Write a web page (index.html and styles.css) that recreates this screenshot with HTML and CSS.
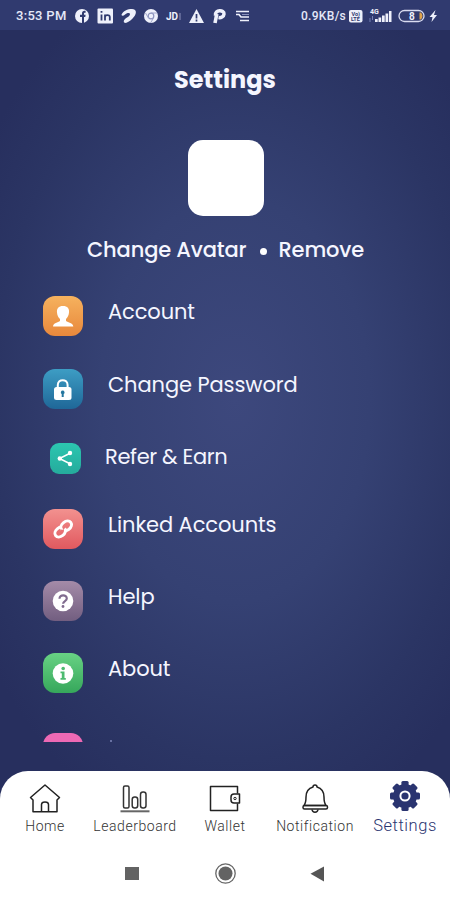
FILE: index.html
```html
<!DOCTYPE html>
<html lang="en">
<head>
    <meta charset="UTF-8">
    <meta name="viewport" content="width=device-width, initial-scale=1.0">
    <title>Settings</title>
    <link rel="stylesheet" href="styles.css">
</head>
<body>
    <div class="phone">
        <div class="status-bar">
            <span class="time">3:53 PM</span>
            <svg class="status-icons" width="180" height="20" viewBox="0 0 180 20" fill="#eef0fb">
                <!-- facebook -->
                <circle cx="7" cy="10" r="7"/>
                <path d="M7 17v-6H5V8.800h2V7.500c0-2 1.200-3 3.600-2.600v1.900c-1.400-.1-1.600.2-1.600 1v1h1.600L10.300 11H9v6z" fill="#303a6f"/>
                <!-- linkedin -->
                <rect x="22.500" y="2.500" width="15.500" height="15" rx="1"/>
                <g stroke="#303a6f" stroke-width="1.800" fill="none">
                    <path d="M26.500 8.500v6M26.500 5v1.800M30 14.500v-6M30 11c0-2.500 4.800-2.700 4.800 0v3.500"/>
                </g>
                <!-- airtel -->
                <path d="M46.500 8.800C48 5 52.500 3 57 3c4.500.2 5 4 2 7.800-2 2.500-5 5.200-7.500 6-3 .8-3.500-1.800-1.500-3.800 1.500-1.500 3.500-1.800 4.500-3.500 1.500-2.500-.5-3-2.500-2.300-2 .8-2.500 2.300-4.500 2.500-.8 0-1.200-.4-1-.9z"/>
                <!-- chrome -->
                <circle cx="76" cy="10" r="7"/>
                <circle cx="76" cy="10" r="2.800" fill="none" stroke="#8b92bd" stroke-width="1.200"/>
                <path d="M76 7h6M73.500 12l-3-5M78.500 12l-3 5" stroke="#a0a6cb"/>
                <text x="91" y="13.500" class="jd">JD</text>
                <path d="M105 7v7" stroke="#8b92bd"/>
                <!-- warning -->
                <path d="M121.500 3l7.500 14h-15z"/>
                <path d="M121.500 8v4.500M121.500 13.500v2" stroke="#303a6f" stroke-width="1.700"/>
                <!-- pinterest -->
                <path d="M140 17l1.800-9" stroke="#eef0fb" stroke-width="3.600"/>
                <path d="M140.500 9.500c-1-6 9-6 8.500-1.500-.3 3-3 4-5.500 3.600" fill="none" stroke="#eef0fb" stroke-width="3.500"/>
                <!-- traffic -->
                <path d="M161 5.500h13M161 8.500h3l2 2.500h8M165 14.500h9" stroke="#eef0fb" stroke-width="1.700" fill="none"/>
                <path d="M167 8.500h7" stroke="#8b92bd" stroke-width="1"/>
            </svg>
            <span class="speed">0.9KB/s</span>
            <svg class="signal-icons" width="92" height="20" viewBox="0 0 92 20" fill="#eef0fb">
                <rect x="2" y="4" width="13.500" height="12.500" rx="2"/>
                <text x="4.500" y="9.500" class="volte">Vo)</text>
                <text x="4" y="14.800" class="volte">LTE</text>
                <text x="23" y="7.500" class="four-g">4G</text>
                <path d="M23 12v4M25.500 14v-4" stroke="#7580b4"/>
                <path d="M28 13h2.700v3H28zM31.500 11.500h2.700V16h-2.700zM35 9.500h2.700V16H35zM38.500 7.500h2.700V16h-2.700zM42 5h2.500v11H42z"/>
                <rect x="52" y="4.500" width="25" height="11" rx="5.500" fill="none" stroke="#d9dcf0" stroke-width="1.300"/>
                <path d="M72.500 6.500h1.500c2 2 2 5 0 7h-1.500z" fill="#dfa34b"/>
                <text x="62" y="13.600" class="battery">8</text>
                <path d="M88.500 4l-6 7h3l-1 5 5.500-7h-3z"/>
            </svg>
        </div>

        <main class="screen">
            <h1>Settings</h1>
            <div class="avatar"></div>
            <div class="avatar-actions">
                <span class="change">Change Avatar</span>
                <span class="dot"></span>
                <span class="remove">Remove</span>
            </div>

            <div class="menu">
                <div class="item">
                    <div class="icon orange">
                        <svg width="40" height="40" viewBox="0 0 40 40" fill="#fff">
                            <path d="M20 10c4.500 0 6.500 2.500 6 6.500-.2 3-1.500 5-3 6.500v2c2 1.500 7 1.700 7.300 5.500H10c.300-3.800 5-4 7-5.500v-2c-1.700-1.500-2.800-3.500-3-6.500-.4-4 1.500-6.500 6-6.500z"/>
                        </svg>
                    </div>
                    <span class="label">Account</span>
                </div>
                <div class="item">
                    <div class="icon blue">
                        <svg width="40" height="40" viewBox="0 0 40 40">
                            <path d="M14.800 19v-3c0-6.500 9.800-6.500 9.800 0v3" fill="none" stroke="#fff" stroke-width="2"/>
                            <rect x="11" y="18" width="17.500" height="13" rx="2.500" fill="#fff"/>
                            <path d="M19.700 21.500a1.900 1.900 0 0 1 1 3.500v3h-2v-3a1.900 1.900 0 0 1 1-3.500z" fill="#24769f"/>
                        </svg>
                    </div>
                    <span class="label">Change Password</span>
                </div>
                <div class="item refer-item">
                    <div class="icon teal">
                        <svg width="31" height="31" viewBox="0 0 31 31" fill="#fff">
                            <path d="M20.500 10l-11 5.500 11 5.500" fill="none" stroke="#fff" stroke-width="1.500"/>
                            <circle cx="20" cy="10" r="2.200"/>
                            <circle cx="9.800" cy="15.500" r="2.200"/>
                            <circle cx="20" cy="21" r="2.200"/>
                        </svg>
                    </div>
                    <span class="label refer">Refer &amp; Earn</span>
                </div>
                <div class="item">
                    <div class="icon red">
                        <svg width="40" height="40" viewBox="0 0 40 40">
                            <g fill="none" stroke="#fff" stroke-width="3">
                                <ellipse cx="17.200" cy="23" rx="5.800" ry="4.300" transform="rotate(-38 17.200 23)" pathLength="100" stroke-dasharray="88 12"/>
                                <ellipse cx="23.200" cy="17" rx="5.800" ry="4.300" transform="rotate(142 23.200 17)" pathLength="100" stroke-dasharray="88 12"/>
                            </g>
                        </svg>
                    </div>
                    <span class="label">Linked Accounts</span>
                </div>
                <div class="item">
                    <div class="icon purple">
                        <svg width="40" height="40" viewBox="0 0 40 40">
                            <circle cx="20" cy="20" r="10.300" fill="#fff"/>
                            <path d="M16.500 17.800c0-4.700 7.400-4.400 7.300-.2 0 2.600-3.700 2.500-3.700 5.200" fill="none" stroke="#806b8f" stroke-width="2.200"/>
                            <circle cx="20" cy="25.500" r="1.400" fill="#806b8f"/>
                        </svg>
                    </div>
                    <span class="label">Help</span>
                </div>
                <div class="item last-full">
                    <div class="icon green">
                        <svg width="40" height="40" viewBox="0 0 40 40">
                            <circle cx="20" cy="20.500" r="10.300" fill="#fff"/>
                            <path d="M17.500 18.500h4v6.500h1.300v1.800h-5.300V25h1.300v-4.700h-1.300z" fill="#4dbb70"/>
                            <circle cx="20.200" cy="15.500" r="1.800" fill="#4dbb70"/>
                        </svg>
                    </div>
                    <span class="label">About</span>
                </div>
                <div class="item">
                    <div class="icon pink"></div>
                    <span class="speck"></span>
                </div>
            </div>
        </main>

        <footer>
            <nav class="tabs">
                <div class="tab">
                    <svg width="32" height="32" viewBox="0 0 32 32" fill="none" stroke="#222" stroke-width="1.500" stroke-linejoin="round">
                        <path d="M4 29.800V18L1.500 15.500 16 3l14.500 12.500L28 18v11.800z"/>
                        <path d="M12.500 29v-6.500c0-3.500 7-3.500 7 0V29"/>
                    </svg>
                    <span>Home</span>
                </div>
                <div class="tab">
                    <svg width="32" height="32" viewBox="0 0 32 32" fill="none" stroke="#333" stroke-width="1.500">
                        <rect x="4.500" y="4" width="5.500" height="22" rx="1.500"/>
                        <rect x="13.200" y="15" width="5.500" height="11" rx="2.500"/>
                        <rect x="21.500" y="10" width="5.500" height="16" rx="2.500"/>
                        <path d="M1.500 29.300h29" stroke="#666" stroke-width="2"/>
                    </svg>
                    <span>Leaderboard</span>
                </div>
                <div class="tab">
                    <svg width="32" height="32" viewBox="0 0 32 32" fill="none" stroke="#222" stroke-width="1.500" stroke-linejoin="round">
                        <path d="M28.500 11.500V4.500h-27V28.500h27v-7"/>
                        <path d="M30.500 12h-5.500a3 3 0 0 0-3 3v3a3 3 0 0 0 3 3h5.500z"/>
                        <circle cx="26" cy="16.500" r="1.200" stroke-width="1"/>
                    </svg>
                    <span>Wallet</span>
                </div>
                <div class="tab">
                    <svg width="32" height="32" viewBox="0 0 32 32" fill="none" stroke="#222" stroke-width="1.500" stroke-linejoin="round">
                        <path d="M14 5a2 2 0 0 1 4 0c5 1.500 7 5 7 10 0 4 .5 6.500 2 8.500H5c1.500-2 2-4.500 2-8.500 0-5 2-8.500 7-10z"/>
                        <rect x="4" y="23.500" width="24.500" height="3.500" rx="1.500"/>
                        <path d="M13 27.500c.5 3.700 5.500 3.700 6 0"/>
                    </svg>
                    <span>Notification</span>
                </div>
                <div class="tab active">
                    <svg width="32" height="32" viewBox="0 0 32 32" fill="#2a3470">
                        <circle cx="16" cy="16" r="12"/>
                        <rect x="12.400" y="1" width="7.200" height="30" rx="1.500"/>
                        <rect x="12.400" y="1" width="7.200" height="30" rx="1.500" transform="rotate(45 16 16)"/>
                        <rect x="12.400" y="1" width="7.200" height="30" rx="1.500" transform="rotate(90 16 16)"/>
                        <rect x="12.400" y="1" width="7.200" height="30" rx="1.500" transform="rotate(135 16 16)"/>
                        <circle cx="16" cy="16" r="4.600" fill="none" stroke="#fff" stroke-width="2"/>
                    </svg>
                    <span>Settings</span>
                </div>
            </nav>
            <div class="system-nav">
                <svg width="24" height="24" viewBox="0 0 24 24"><path d="M5 5h14v13H5z" fill="#636363"/></svg>
                <svg width="24" height="24" viewBox="0 0 24 24">
                    <circle cx="12.500" cy="11.500" r="9.700" fill="none" stroke="#666" stroke-width="1.300"/>
                    <circle cx="12.500" cy="11.500" r="7" fill="#636363"/>
                </svg>
                <svg width="24" height="24" viewBox="0 0 24 24"><path d="M18 4.500v15L4.500 11.800z" fill="#555"/></svg>
            </div>
        </footer>
    </div>
</body>
</html>
```

FILE: styles.css
```css
* {
    box-sizing: border-box;
}
body {
    margin: 0;
    font-family: Poppins, Inter, sans-serif;
    color: #f5f6ff;
}
.phone {
    width: 450px;
    height: 900px;
    display: flex;
    flex-direction: column;
    overflow: hidden;
    background: radial-gradient(ellipse 300px 450px at 235px 400px, #3d487d 0%, #354173 45%, #2b3564 80%, #272f5e 100%);
}
.status-bar {
    height: 30px;
    flex: none;
    display: flex;
    align-items: center;
    padding: 1px 0 0 16px;
    background-color: #303a6f;
    font-family: Roboto, sans-serif;
    font-weight: 500;
    font-size: 13px;
    color: #e5e8f8;
}
.time {
    width: 59px;
    letter-spacing: 0.3px;
    white-space: nowrap;
}
.status-icons {
    width: 180px;
}
.speed {
    width: 46px;
    margin-left: 46px;
    font-size: 12px;
    letter-spacing: 0.3px;
}
.signal-icons {
    flex: none;
}
.jd {
    font-size: 10px;
    font-weight: bold;
}
.volte {
    font-size: 5.5px;
    font-weight: bold;
    fill: #303a6f;
}
.four-g {
    font-size: 7px;
    font-weight: bold;
}
.battery {
    font-size: 10px;
    font-weight: bold;
}
.screen {
    height: 712px;
    flex: none;
    overflow: hidden;
}
h1 {
    margin: 34px 0 0;
    text-align: center;
    font-size: 24px;
    line-height: 32px;
    font-weight: 700;
}
.avatar {
    width: 76px;
    height: 76px;
    margin: 43.5px auto 0 188px;
    border-radius: 15px;
    background-color: #fff;
}
.avatar-actions {
    display: flex;
    align-items: center;
    height: 32px;
    margin: 18px 0 0 87px;
    font-size: 21px;
    font-weight: 500;
    letter-spacing: -0.15px;
    white-space: nowrap;
}
.change {
    width: 160px;
}
.dot {
    width: 7px;
    height: 7px;
    margin: 4px 11.5px 0 13px;
    border-radius: 50%;
    background-color: #fff;
}
.menu {
    padding: 30.800px 0 0 43px;
}
.item {
    display: flex;
    height: 72.400px;
}
.icon {
    width: 40px;
    height: 40px;
    border-radius: 12px;
    flex: none;
}
.icon svg {
    display: block;
}
.label {
    margin-left: 25px;
    font-size: 21px;
    line-height: 32px;
    letter-spacing: -0.1px;
    white-space: nowrap;
}
.refer-item {
    height: 67.500px;
}
.refer {
    margin-left: 24px;
    letter-spacing: -0.35px;
}
.orange {
    background: linear-gradient(#f6b25e, #e8883c);
}
.blue {
    background: linear-gradient(#3d9dc4, #1f6798);
}
.teal {
    width: 31px;
    height: 31px;
    margin: 2px 0 0 7px;
    border-radius: 9px;
    background: linear-gradient(#2cc6b0, #25ab9c);
}
.red {
    background: linear-gradient(#f2918f, #e1595f);
}
.purple {
    background: linear-gradient(#a48ba8, #725e80);
}
.green {
    background: linear-gradient(#68d284, #36a75b);
}
.pink {
    background: #ed69b4;
}
.last-full {
    height: 80px;
}
.speck {
    width: 2px;
    height: 2px;
    margin: 7px 0 0 27px;
    background-color: #6871a2;
}
footer {
    height: 129.500px;
    margin-top: auto;
    flex: none;
    border-radius: 28px 28px 0 0;
    background-color: #fff;
}
.tabs {
    display: flex;
    height: 75.500px;
    padding-top: 11.500px;
}
.tab {
    width: 90px;
    display: flex;
    flex-direction: column;
    align-items: center;
    font-family: Roboto, sans-serif;
    font-size: 14px;
    font-weight: 300;
    line-height: 20px;
    letter-spacing: 0.55px;
    color: #333;
}
.tab span {
    margin-top: 2px;
    white-space: nowrap;
}
.active {
    font-size: 16.5px;
    color: #2a3470;
}
.active svg {
    margin-top: -2px;
}
.active span {
    margin-top: 4px;
}
.system-nav {
    display: flex;
    gap: 69px;
    padding: 16px 0 0 120px;
}
```
